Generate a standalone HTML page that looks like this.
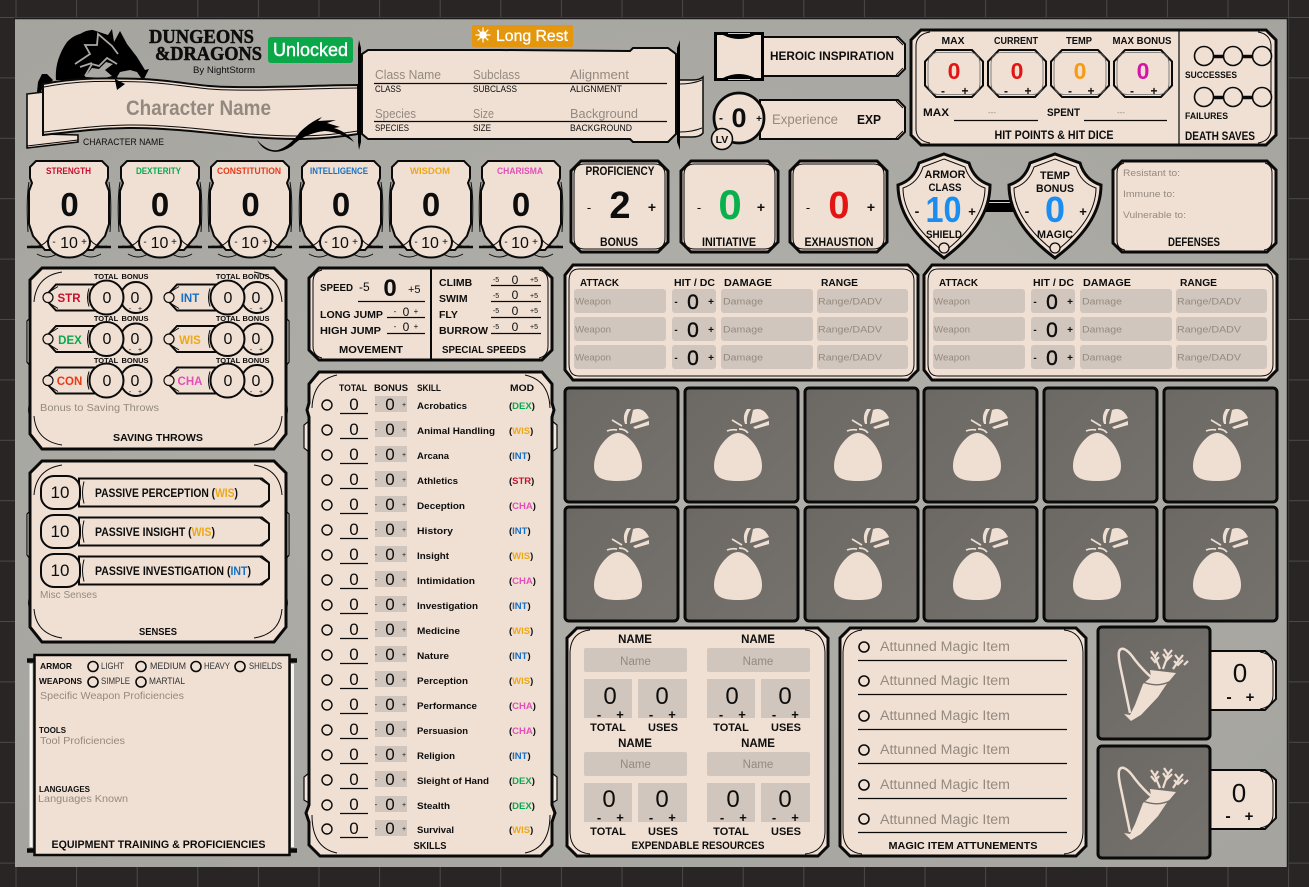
<!DOCTYPE html>
<html><head><meta charset="utf-8"><title>Character Sheet</title>
<style>
html,body{margin:0;padding:0;background:#292525}
svg{display:block}
text{font-family:"Liberation Sans",sans-serif;fill:#0d0d0d}
.b{font-weight:700}
.m{text-anchor:middle}
.p{fill:#94897f}
.f{fill:#f0e0d4;stroke:#0a0a0a;stroke-width:3;stroke-linejoin:miter}
.f2{fill:#f0e0d4;stroke:#0a0a0a;stroke-width:2}
.tb{fill:#f3e6db;stroke:#0a0a0a;stroke-width:1.2}
.t{fill:none;stroke:#0a0a0a;stroke-width:1}
.c{fill:none;stroke:#0a0a0a;stroke-width:1.6}
.g{fill:#d1c6bd}
.l{stroke:#0a0a0a;stroke-width:1.2}
.k{fill:#000}
.str{fill:#c8102e}.dex{fill:#0aa84f}.con{fill:#e83a17}.int{fill:#1670c4}.wis{fill:#eea816}.cha{fill:#e24fb8}
</style></head><body>
<svg xmlns="http://www.w3.org/2000/svg" width="1309" height="887" viewBox="0 0 1309 887">
<defs>
<pattern id="grid" patternUnits="userSpaceOnUse" width="60.6" height="60.4" x="15.5" y="17">
<rect width="60.6" height="60.4" fill="#292525"/><path d="M0 0H60.6M0 0V60.4" stroke="#4a4848" stroke-width="2"/>
</pattern>
<radialGradient id="sheet" cx="50%" cy="50%" r="75%"><stop offset="0" stop-color="#b1b0aa"/><stop offset="1" stop-color="#a4a39d"/></radialGradient>
<linearGradient id="cell" x1="0" y1="0" x2="1" y2="1"><stop offset="0" stop-color="#6c6864"/><stop offset="1" stop-color="#75716d"/></linearGradient>

<g id="ab">
<path d="M-42 247H-22M22 247H42" stroke="#0a0a0a" stroke-width="2.5"/>
<path d="M-33 161H33L39 167V178L37 183L40 191V224L36 236L24 250H-24L-36 236L-40 224V191L-37 183L-39 178V167Z" class="f2"/>
<path d="M-40 182Q-43 200 -41 232M40 182Q43 200 41 232" class="t" stroke-width="1.5"/>
<path d="M-32 254Q-22 260 -12 254M32 254Q22 260 12 254M-38 246Q-26 248 -20 238M38 246Q26 248 20 238" class="t"/>
<ellipse cx="0" cy="242" rx="21" ry="15.5" class="f2"/>
</g>

<g id="bag">
<rect x="0" y="0" width="113" height="114" rx="4" fill="url(#cell)" stroke="#0a0a0a" stroke-width="3"/>
<path d="M53 45C43 45 29 62 29 78C29 90 38 93 53 93C68 93 77 90 77 78C77 62 63 45 53 45Z" fill="#efdfd3"/>
<path d="M65 36L68 22Q78 18 84 30Q76 33 65 36ZM60 36Q57 28 62 21L66 21Q61 28 62 36ZM68 39L84 33L84 37L70 41Z" fill="#efdfd3"/>
<path d="M47 32L57 38M42 43Q47 41 52 42M54 41Q60 41 63 45" stroke="#efdfd3" stroke-width="1.7" fill="none"/>
</g>

<g id="qv">
<rect x="0" y="0" width="112" height="112" rx="4" fill="url(#cell)" stroke="#0a0a0a" stroke-width="3"/>
<path d="M32 86L23 43Q20 30 21 25Q22 21 26 22Q31 24 37 33Q44 42 53 50" fill="none" stroke="#efdfd3" stroke-width="2.5"/>
<path d="M52 43L78 46L68 58L60 70L43 88L33 94L26 87L32 88L37 78L45 57L53 50Z" fill="#efdfd3"/>
<path d="M45 55Q60 61 73 54" stroke="#716d69" stroke-width="1.4" fill="none"/>
<path d="M62 42L57 30M53 24L57 30L60 25M53 30L57 35L61 30M65 42L70 28M66 22L70 28L74 23M65 27L69 33L74 28M75 42L81 33M77 28L81 33L85 28M76 34L80 38L85 33M86 38L90 34" stroke="#efdfd3" stroke-width="2.2" fill="none"/>
</g>

<g id="oct">
<path d="M-18 -23.5H18L29 -12V12L18 23.5H-18L-29 12V-12Z" class="f2"/>
<path d="M-15 -21H15Q26 -21 26 -9V9Q26 21 15 21H-15Q-26 21 -26 9V-9Q-26 -21 -15 -21Z" fill="none" stroke="#666" stroke-width=".8"/>
</g>

<g id="sv">
<path d="M-4 0L8 -13H46V13H8Z" class="f2" stroke-width="1.4"/>
<path d="M2 6L10 11M2 -6L10 -11" class="t"/>
<circle cx="0" cy="0" r="5" fill="#f0e0d4" stroke="#0a0a0a" stroke-width="1.2"/>
<path d="M41 -9Q38 0 41 9" class="t"/>
<circle cx="88" cy="0" r="15.500" class="f2" stroke-width="2.2"/>
<circle cx="58.500" cy="0" r="17" class="f2" stroke-width="2.2"/>
</g>

<g id="sen">
<path d="M38 -14H221L228 -8V8L221 14H38Z" class="f2" stroke-width="1.8"/>
<path d="M218 -14L227 -8M218 14L227 8" class="t"/>
<path d="M43 -11Q40 0 43 11" class="t"/>
<rect x="0" y="-16.500" width="39" height="33" rx="13" class="f2"/>
</g>

<g id="sk">
<circle cx="327" cy="0" r="5" fill="none" stroke="#0a0a0a" stroke-width="1.4"/>
<path d="M340 8.5H368" class="l"/>
<rect x="375" y="-9" width="32" height="16" class="g"/>
</g>

<g id="atk">
<rect x="9" y="0" width="92" height="24" rx="3" class="g"/>
<rect x="107" y="0" width="44" height="24" rx="3" class="g"/>
<rect x="156" y="0" width="92" height="24" rx="3" class="g"/>
<rect x="252" y="0" width="91" height="24" rx="3" class="g"/>
<text x="10" y="15.5" font-size="9.5" class="p" textLength="36" lengthAdjust="spacingAndGlyphs">Weapon</text>
<text x="128" y="20" font-size="21" class="m" stroke="#0d0d0d" stroke-width=".4">0</text>
<text x="111" y="16" font-size="10" class="b m">-</text>
<text x="146" y="16" font-size="10" class="b m">+</text>
<text x="158" y="15.5" font-size="9.5" class="p" textLength="40" lengthAdjust="spacingAndGlyphs">Damage</text>
<text x="253" y="15.5" font-size="9.5" class="p" textLength="64" lengthAdjust="spacingAndGlyphs">Range/DADV</text>
</g>

<g id="atkp">
<path d="M8 0H343L353 10V105L343 115H8L0 105V10Z" class="f"/>
<path d="M14 4H337Q349 4 349 16V99Q349 111 337 111H14Q4 111 4 99V16Q4 4 14 4Z" class="t"/>
</g>

<g id="box">
<path d="M10 0H87L97 10V81L87 91H10L0 81V10Z" class="f" stroke-width="2.5"/>
<path d="M14 3H83Q94 3 94 14V77Q94 88 83 88H14Q3 88 3 77V14Q3 3 14 3Z" class="t"/>
</g>

<g id="shd">
<path d="M0 0L25 9Q30 26 46 31Q46 70 0 104Q-46 70 -46 31Q-30 26 -25 9Z" fill="#f0e0d4" stroke="#0a0a0a" stroke-width="3"/>
<path d="M0 5L21 13Q26 29 41 34Q41 66 0 98Q-41 66 -41 34Q-26 29 -21 13Z" class="t"/>
<circle cx="0" cy="94" r="5" fill="#f0e0d4" stroke="#0a0a0a" stroke-width="1.3"/>
</g>

<g id="cnt">
<path d="M0 0H55L66 10V48L55 59H0Z" class="f2" stroke-width="2"/>
<path d="M50 1Q63 3 63 15V44Q63 56 50 58" class="t"/>
</g>

<g id="bigp">
<path d="M2 50L-1 53V94L2 98ZM258 50L261 53V94L258 98Z" class="tb"/>
<path d="M14 0H246L258 12V166L246 181H14L2 166V12Z" class="f" stroke-width="3.200"/>
<path d="M2 135Q-1 142 2 149M258 135Q261 142 258 149" class="t" stroke-width="1.500"/>
<path d="M34 4Q8 8 6 34M226 4Q252 8 254 34M6 148Q8 173 34 177M254 148Q252 173 226 177" class="t"/>
</g>
</defs>

<rect width="1309" height="887" fill="url(#grid)"/>
<rect x="15" y="19" width="1272" height="848" fill="url(#sheet)"/>
<path d="M14 18.5H1287.5V867.5" fill="none" stroke="#1c1a1a" stroke-width="1.5"/>

<!-- dragon behind banner -->
<path d="M56 80C55 68 58 55 67 42C72 37 76 35 80 34C85 31 89 30 93 30L108 35L112 29L114 42L120 31L127 44L137 57L145 70L149 69L143 81L137 72L130 70L120 72L117 77L125 84L117 90L115 80Z" class="k"/>
<path d="M85 77L92 68L99 69L106 62L113 64L105 70L112 76L105 78Z" fill="#a9a8a2"/>
<path d="M75 64L90 54L85 45L97 45L98 34L112 46L118 54M80 67L92 63M85 76L92 64L99 66L107 58L117 64" fill="none" stroke="#a9a8a2" stroke-width="1.800"/>
<path d="M37 92L38 82L42 74L47 74L53 80L50 84L44 84L41 92Z" class="k"/>

<!-- banner -->
<path d="M27 94L44 92V134L78 135V142L27 148Z" fill="#f0e0d4" stroke="#0a0a0a" stroke-width="1.6"/>
<path d="M27 146L78 140" class="t" stroke-width="1.5"/>
<path d="M43 84C80 77 110 78 143 79C180 81 200 87 233 87C280 88 320 85 358 85V134C320 140 290 140 250 137C210 133 170 128 133 128C100 128 70 132 43 135Z" fill="#f0e0d4" stroke="#0a0a0a" stroke-width="2"/>
<path d="M44 87C80 80 110 81 143 82C180 84 200 90 233 90C280 91 320 88 358 88M44 132C70 129 100 125 133 125C170 125 210 130 250 134C290 137 320 137 358 131" fill="none" stroke="#0a0a0a" stroke-width="1"/>
<path d="M115 79L125 84L117 90L115 80Z" class="k"/>
<!-- tail -->
<path d="M257 140Q268 152 278 150Q290 146 300 132Q310 122 322 117L318 121L336 120L327 123L340 127L334 128Q347 132 354 142Q340 132 325 131Q305 133 292 146Q280 154 270 151Q262 149 257 140Z" class="k"/>

<text x="149" y="43" font-size="19.5" font-weight="700" stroke="#0d0d0d" stroke-width=".5" style="font-family:'Liberation Serif',serif" textLength="105" lengthAdjust="spacingAndGlyphs">DUNGEONS</text>
<text x="155" y="60" font-size="19.5" font-weight="700" stroke="#0d0d0d" stroke-width=".5" style="font-family:'Liberation Serif',serif" textLength="107" lengthAdjust="spacingAndGlyphs">&amp;DRAGONS</text>
<text x="193" y="73" font-size="9.5" textLength="62" lengthAdjust="spacingAndGlyphs">By NightStorm</text>

<rect x="268" y="37" width="85" height="26" rx="3" fill="#0ba84a"/>
<text x="310.500" y="56" font-size="18" class="m" style="fill:#fff" stroke="#fff" stroke-width=".4" textLength="75" lengthAdjust="spacingAndGlyphs">Unlocked</text>

<text x="126" y="115" font-size="21" class="b p" textLength="145" lengthAdjust="spacingAndGlyphs">Character Name</text>
<text x="83" y="145" font-size="9.5" textLength="81" lengthAdjust="spacingAndGlyphs">CHARACTER NAME</text>

<rect x="472" y="25" width="101" height="22" rx="2" fill="#e3960e"/>
<circle cx="483" cy="35" r="3.8" fill="#fff"/>
<path d="M483 27.500V42.500M475.500 35H490.500M477.700 29.700L488.300 40.300M488.300 29.700L477.700 40.300" stroke="#fff" stroke-width="1.2"/>
<text x="496" y="41" font-size="16" style="fill:#fff" stroke="#fff" stroke-width=".3" textLength="72" lengthAdjust="spacingAndGlyphs">Long Rest</text>

<!-- class panel -->
<path d="M678 80H692Q700 80 703 77V133Q700 137 692 137H678Z" fill="#f0e0d4" stroke="#0a0a0a" stroke-width="1.5"/>
<path d="M680 84Q692 84 702 80M680 132Q692 132 702 128" class="t"/>
<path d="M368 50H500L630 51L633 48H668L676 54V134L668 142H633L630 139L500 139H368L362 134V54Z" fill="#f0e0d4" stroke="#0a0a0a" stroke-width="2"/>
<path d="M680 40V150L677 142V48Z" class="k"/>
<path d="M359 40L361 48V142L359 150L358 142V48Z" class="k"/>
<text x="375" y="79" font-size="13" class="p" textLength="66" lengthAdjust="spacingAndGlyphs">Class Name</text>
<text x="473" y="79" font-size="13" class="p" textLength="47" lengthAdjust="spacingAndGlyphs">Subclass</text>
<text x="570" y="79" font-size="13" class="p" textLength="59" lengthAdjust="spacingAndGlyphs">Alignment</text>
<path d="M374 83.500H667M374 121.500H667" class="l"/>
<text x="375" y="92" font-size="9" textLength="26" lengthAdjust="spacingAndGlyphs">CLASS</text>
<text x="473" y="92" font-size="9" textLength="44" lengthAdjust="spacingAndGlyphs">SUBCLASS</text>
<text x="570" y="92" font-size="9" textLength="52" lengthAdjust="spacingAndGlyphs">ALIGNMENT</text>
<text x="375" y="118" font-size="13" class="p" textLength="41" lengthAdjust="spacingAndGlyphs">Species</text>
<text x="473" y="118" font-size="13" class="p" textLength="21" lengthAdjust="spacingAndGlyphs">Size</text>
<text x="570" y="118" font-size="13" class="p" textLength="68" lengthAdjust="spacingAndGlyphs">Background</text>
<text x="375" y="131" font-size="9" textLength="34" lengthAdjust="spacingAndGlyphs">SPECIES</text>
<text x="473" y="131" font-size="9" textLength="18" lengthAdjust="spacingAndGlyphs">SIZE</text>
<text x="570" y="131" font-size="9" textLength="62" lengthAdjust="spacingAndGlyphs">BACKGROUND</text>

<!-- heroic -->
<path d="M760 37H898L905 44V69L898 76H760Z" class="f2" stroke-width="2"/>
<path d="M896 38L903 45M896 75L903 68" class="t"/>
<rect x="714" y="32" width="50" height="49" class="k"/>
<path d="M717 35H723Q731 39 739 39Q747 39 755 35H761V78H755Q747 74 739 74Q731 74 723 78H717Z" fill="#f0e0d4"/>
<path d="M728 33.500H750M728 79.500H750" stroke="#cfc8c0" stroke-width="1"/>
<text x="770" y="60" font-size="12" class="b" textLength="124" lengthAdjust="spacingAndGlyphs">HEROIC INSPIRATION</text>

<path d="M760 100H898L905 107V132L898 139H760Z" class="f2" stroke-width="2"/>
<path d="M896 101L903 108M896 138L903 131" class="t"/>
<circle cx="739" cy="118" r="25" fill="#f0e0d4" stroke="#0a0a0a" stroke-width="2.8"/>
<circle cx="722" cy="139" r="10.500" fill="#f0e0d4" stroke="#0a0a0a" stroke-width="1.6"/>
<text x="722" y="143" font-size="10.500" class="b m">LV</text>
<text x="739" y="127" font-size="27" class="b m">0</text>
<text x="721" y="122" font-size="12" class="b m">-</text>
<text x="759" y="122" font-size="10" class="b m">+</text>
<text x="772" y="124" font-size="14" class="p" textLength="66" lengthAdjust="spacingAndGlyphs">Experience</text>
<text x="857" y="124" font-size="13" class="b" textLength="24" lengthAdjust="spacingAndGlyphs">EXP</text>

<!-- HP -->
<path d="M921 30H1266L1276 40V135L1266 145H921L911 135V40Z" class="f"/>
<path d="M930 32Q917 34 916 45V130Q917 141 930 143M1258 32Q1270 34 1271 45V130Q1270 141 1258 143" class="t"/>
<path d="M1179 31V144" class="l" stroke-width="1.6"/>
<text x="953" y="44" font-size="10" class="b m" textLength="23" lengthAdjust="spacingAndGlyphs">MAX</text>
<text x="1016" y="44" font-size="10" class="b m" textLength="44" lengthAdjust="spacingAndGlyphs">CURRENT</text>
<text x="1079" y="44" font-size="10" class="b m" textLength="26" lengthAdjust="spacingAndGlyphs">TEMP</text>
<text x="1142" y="44" font-size="10" class="b m" textLength="59" lengthAdjust="spacingAndGlyphs">MAX BONUS</text>
<use href="#oct" x="954" y="73.500"/><use href="#oct" x="1017" y="73.500"/><use href="#oct" x="1080" y="73.500"/><use href="#oct" x="1143" y="73.500"/>
<text x="954" y="79" font-size="23" class="b m" style="fill:#e31414">0</text>
<text x="1017" y="79" font-size="23" class="b m" style="fill:#e31414">0</text>
<text x="1080" y="79" font-size="23" class="b m" style="fill:#f59a13">0</text>
<text x="1143" y="79" font-size="23" class="b m" style="fill:#d414a8">0</text>
<text x="943" y="95" font-size="12" class="b m">-</text><text x="965" y="95" font-size="12" class="b m">+</text>
<text x="1006" y="95" font-size="12" class="b m">-</text><text x="1028" y="95" font-size="12" class="b m">+</text>
<text x="1070" y="95" font-size="12" class="b m">-</text><text x="1091" y="95" font-size="12" class="b m">+</text>
<text x="1132" y="95" font-size="12" class="b m">-</text><text x="1154" y="95" font-size="12" class="b m">+</text>
<text x="923" y="116" font-size="11" class="b" textLength="26" lengthAdjust="spacingAndGlyphs">MAX</text>
<path d="M954 120.500H1038M1084 120.500H1167" class="l"/>
<text x="992" y="115" font-size="8" class="m p">---</text>
<text x="1121" y="115" font-size="8" class="m p">---</text>
<text x="1047" y="116" font-size="11" class="b" textLength="33" lengthAdjust="spacingAndGlyphs">SPENT</text>
<text x="1054" y="139" font-size="11.500" class="b m" textLength="119" lengthAdjust="spacingAndGlyphs">HIT POINTS &amp; HIT DICE</text>
<path d="M1204 56.500H1262M1204 97.500H1262" stroke="#0a0a0a" stroke-width="3.5"/>
<g fill="#f0e0d4" stroke="#0a0a0a" stroke-width="1.6">
<circle cx="1204" cy="56" r="9.500"/><circle cx="1233" cy="56" r="9.500"/><circle cx="1262" cy="56" r="9.500"/>
<circle cx="1204" cy="97" r="9.500"/><circle cx="1233" cy="97" r="9.500"/><circle cx="1262" cy="97" r="9.500"/>
</g>
<text x="1185" y="78" font-size="9.500" class="b" textLength="52" lengthAdjust="spacingAndGlyphs">SUCCESSES</text>
<text x="1185" y="119" font-size="9.500" class="b" textLength="43" lengthAdjust="spacingAndGlyphs">FAILURES</text>
<text x="1220" y="140" font-size="12" class="b m" textLength="70" lengthAdjust="spacingAndGlyphs">DEATH SAVES</text>

<!-- abilities -->
<use href="#ab" x="69"/><use href="#ab" x="160"/><use href="#ab" x="250"/><use href="#ab" x="341"/><use href="#ab" x="431"/><use href="#ab" x="521"/>
<text x="68.500" y="174" font-size="9.500" class="b m str" textLength="45" lengthAdjust="spacingAndGlyphs">STRENGTH</text>
<text x="158.500" y="174" font-size="9.500" class="b m dex" textLength="45" lengthAdjust="spacingAndGlyphs">DEXTERITY</text>
<text x="249" y="174" font-size="9.500" class="b m con" textLength="64" lengthAdjust="spacingAndGlyphs">CONSTITUTION</text>
<text x="339" y="174" font-size="9.500" class="b m int" textLength="58" lengthAdjust="spacingAndGlyphs">INTELLIGENCE</text>
<text x="430" y="174" font-size="9.500" class="b m wis" textLength="40" lengthAdjust="spacingAndGlyphs">WISDOM</text>
<text x="520" y="174" font-size="9.500" class="b m cha" textLength="46" lengthAdjust="spacingAndGlyphs">CHARISMA</text>
<g font-size="33"><text x="69.500" y="216" class="b m">0</text><text x="160" y="216" class="b m">0</text><text x="250.500" y="216" class="b m">0</text><text x="341" y="216" class="b m">0</text><text x="431" y="216" class="b m">0</text><text x="521" y="216" class="b m">0</text></g>
<g font-size="16"><text x="69" y="248" class="m">10</text><text x="159.500" y="248" class="m">10</text><text x="250" y="248" class="m">10</text><text x="340" y="248" class="m">10</text><text x="430" y="248" class="m">10</text><text x="520" y="248" class="m">10</text></g>
<g font-size="10"><text x="54" y="245" class="m">-</text><text x="84" y="245" class="m">+</text><text x="145" y="245" class="m">-</text><text x="174" y="245" class="m">+</text><text x="236" y="245" class="m">-</text><text x="265" y="245" class="m">+</text><text x="326" y="245" class="m">-</text><text x="355" y="245" class="m">+</text><text x="416" y="245" class="m">-</text><text x="445" y="245" class="m">+</text><text x="506" y="245" class="m">-</text><text x="535" y="245" class="m">+</text></g>

<!-- proficiency etc -->
<use href="#box" x="571" y="161"/><use href="#box" x="681" y="161"/><use href="#box" x="790" y="161"/>
<text x="620" y="175" font-size="11.500" class="b m" textLength="69" lengthAdjust="spacingAndGlyphs">PROFICIENCY</text>
<text x="620" y="218" font-size="38" class="b m">2</text>
<text x="589" y="212" font-size="13" class="m">-</text><text x="652" y="212" font-size="14" class="b m">+</text>
<text x="619" y="246" font-size="11.500" class="b m" textLength="38" lengthAdjust="spacingAndGlyphs">BONUS</text>
<text x="730" y="219" font-size="42" class="b m" style="fill:#0ab04d">0</text>
<text x="699" y="212" font-size="13" class="m">-</text><text x="761" y="212" font-size="14" class="b m">+</text>
<text x="729" y="246" font-size="11.500" class="b m" textLength="54" lengthAdjust="spacingAndGlyphs">INITIATIVE</text>
<text x="839" y="218" font-size="38" class="b m" style="fill:#e31414">0</text>
<text x="808" y="212" font-size="13" class="m">-</text><text x="871" y="212" font-size="14" class="b m">+</text>
<text x="839" y="246" font-size="11.500" class="b m" textLength="69" lengthAdjust="spacingAndGlyphs">EXHAUSTION</text>

<!-- shields -->
<rect x="985" y="200" width="30" height="12" class="k"/><path d="M986 202.500H1014" stroke="#d8d4cf" stroke-width="1"/>
<use href="#shd" x="944" y="154"/><use href="#shd" x="1055" y="154"/>
<text x="945" y="178" font-size="11" class="b m" textLength="41" lengthAdjust="spacingAndGlyphs">ARMOR</text>
<text x="945" y="191" font-size="11" class="b m" textLength="33" lengthAdjust="spacingAndGlyphs">CLASS</text>
<text x="943.500" y="222" font-size="36" class="b m" style="fill:#1a8ef0" textLength="36" lengthAdjust="spacingAndGlyphs">10</text>
<text x="917" y="216" font-size="14" class="b m">-</text><text x="972" y="216" font-size="13" class="b m">+</text>
<text x="944" y="238" font-size="11" class="b m" textLength="36" lengthAdjust="spacingAndGlyphs">SHIELD</text>
<text x="1055" y="179" font-size="11" class="b m" textLength="30" lengthAdjust="spacingAndGlyphs">TEMP</text>
<text x="1055" y="192" font-size="11" class="b m" textLength="38" lengthAdjust="spacingAndGlyphs">BONUS</text>
<text x="1055" y="222" font-size="36" class="b m" style="fill:#1a8ef0">0</text>
<text x="1027" y="216" font-size="14" class="b m">-</text><text x="1083" y="216" font-size="13" class="b m">+</text>
<text x="1055" y="238" font-size="11" class="b m" textLength="36" lengthAdjust="spacingAndGlyphs">MAGIC</text>

<!-- defenses -->
<path d="M1122 161H1267L1276 170V243L1267 252H1122L1113 243V170Z" class="f" stroke-width="2.5"/>
<path d="M1124 163Q1117 165 1117 173V240Q1117 249 1125 250M1265 163Q1272 165 1272 173V240Q1272 249 1264 250" class="t"/>
<text x="1123" y="176" font-size="9.500" class="p" textLength="57" lengthAdjust="spacingAndGlyphs">Resistant to:</text>
<text x="1123" y="197" font-size="9.500" class="p" textLength="52" lengthAdjust="spacingAndGlyphs">Immune to:</text>
<text x="1123" y="218" font-size="9.500" class="p" textLength="63" lengthAdjust="spacingAndGlyphs">Vulnerable to:</text>
<text x="1194" y="246" font-size="11.500" class="b m" textLength="52" lengthAdjust="spacingAndGlyphs">DEFENSES</text>

<!-- saving throws -->
<use href="#bigp" x="28" y="268"/>
<g font-size="7.500">
<text x="106" y="279" class="b m">TOTAL</text><text x="135" y="279" class="b m">BONUS</text><text x="228" y="279" class="b m">TOTAL</text><text x="256" y="279" class="b m">BONUS</text>
<text x="106" y="321" class="b m">TOTAL</text><text x="135" y="321" class="b m">BONUS</text><text x="228" y="321" class="b m">TOTAL</text><text x="256" y="321" class="b m">BONUS</text>
<text x="106" y="363" class="b m">TOTAL</text><text x="135" y="363" class="b m">BONUS</text><text x="228" y="363" class="b m">TOTAL</text><text x="256" y="363" class="b m">BONUS</text>
</g>
<use href="#sv" x="48" y="297.500"/><use href="#sv" x="169" y="297.500"/><use href="#sv" x="48" y="339"/><use href="#sv" x="169" y="339"/><use href="#sv" x="48" y="380.500"/><use href="#sv" x="169" y="380.500"/>
<text x="69" y="302" font-size="11.500" class="b m str">STR</text>
<text x="190" y="302" font-size="11.500" class="b m int">INT</text>
<text x="70" y="344" font-size="11.500" class="b m dex">DEX</text>
<text x="190" y="344" font-size="11.500" class="b m wis">WIS</text>
<text x="69.500" y="385" font-size="11.500" class="b m con">CON</text>
<text x="190" y="385" font-size="11.500" class="b m cha">CHA</text>
<g font-size="16">
<text x="107" y="303" class="m">0</text><text x="135" y="303" class="m">0</text><text x="228" y="303" class="m">0</text><text x="256" y="303" class="m">0</text>
<text x="107" y="344" class="m">0</text><text x="135" y="344" class="m">0</text><text x="228" y="344" class="m">0</text><text x="256" y="344" class="m">0</text>
<text x="107" y="386" class="m">0</text><text x="135" y="386" class="m">0</text><text x="228" y="386" class="m">0</text><text x="256" y="386" class="m">0</text>
</g>
<g font-size="7">
<text x="130" y="311" class="m">-</text><text x="140" y="311" class="m">+</text><text x="251" y="311" class="m">-</text><text x="261" y="311" class="m">+</text>
<text x="130" y="352" class="m">-</text><text x="140" y="352" class="m">+</text><text x="251" y="352" class="m">-</text><text x="261" y="352" class="m">+</text>
<text x="130" y="394" class="m">-</text><text x="140" y="394" class="m">+</text><text x="251" y="394" class="m">-</text><text x="261" y="394" class="m">+</text>
</g>
<text x="40" y="411" font-size="10" class="p" textLength="119" lengthAdjust="spacingAndGlyphs">Bonus to Saving Throws</text>
<text x="158" y="441" font-size="10.500" class="b m" textLength="90" lengthAdjust="spacingAndGlyphs">SAVING THROWS</text>

<!-- senses -->
<use href="#bigp" x="28" y="461"/>
<use href="#sen" x="41" y="492.500"/><use href="#sen" x="41" y="531.500"/><use href="#sen" x="41" y="570.500"/>
<text x="60" y="498" font-size="17" class="m">10</text><text x="60" y="537" font-size="17" class="m">10</text><text x="60" y="576" font-size="17" class="m">10</text>
<text x="95" y="497" font-size="11.500" class="b" textLength="143" lengthAdjust="spacingAndGlyphs">PASSIVE PERCEPTION (<tspan class="wis">WIS</tspan>)</text>
<text x="95" y="536" font-size="11.500" class="b" textLength="120" lengthAdjust="spacingAndGlyphs">PASSIVE INSIGHT (<tspan class="wis">WIS</tspan>)</text>
<text x="95" y="575" font-size="11.500" class="b" textLength="156" lengthAdjust="spacingAndGlyphs">PASSIVE INVESTIGATION (<tspan class="int">INT</tspan>)</text>
<text x="40" y="598" font-size="10" class="p" textLength="57" lengthAdjust="spacingAndGlyphs">Misc Senses</text>
<text x="158" y="635" font-size="10.500" class="b m" textLength="38" lengthAdjust="spacingAndGlyphs">SENSES</text>

<!-- movement -->
<path d="M319 268H542L552 278V350L542 360H319L309 350V278Z" class="f"/>
<path d="M322 270Q313 272 313 282V346Q313 356 322 358M539 270Q548 272 548 282V346Q548 356 539 358" class="t"/>
<path d="M431 268V360" stroke="#0a0a0a" stroke-width="2"/>
<text x="320" y="291" font-size="10.500" class="b" textLength="33" lengthAdjust="spacingAndGlyphs">SPEED</text>
<text x="359" y="291" font-size="12">-5</text><text x="390" y="296" font-size="24" class="b m">0</text><text x="408" y="293" font-size="11">+5</text>
<path d="M358 301.500H425M387 317.500H425M387 333.500H425" class="l"/>
<text x="320" y="318" font-size="10.500" class="b" textLength="63" lengthAdjust="spacingAndGlyphs">LONG JUMP</text>
<text x="320" y="334" font-size="10.500" class="b" textLength="61" lengthAdjust="spacingAndGlyphs">HIGH JUMP</text>
<text x="406" y="316" font-size="12" class="m">0</text><text x="395" y="314" font-size="8" class="m">-</text><text x="416" y="314" font-size="8" class="m">+</text>
<text x="406" y="331" font-size="12" class="m">0</text><text x="395" y="329" font-size="8" class="m">-</text><text x="416" y="329" font-size="8" class="m">+</text>
<text x="371" y="353" font-size="10.500" class="b m" textLength="64" lengthAdjust="spacingAndGlyphs">MOVEMENT</text>
<text x="439" y="286" font-size="10.500" class="b">CLIMB</text><text x="439" y="302" font-size="10.500" class="b">SWIM</text><text x="439" y="318" font-size="10.500" class="b">FLY</text><text x="439" y="334" font-size="10.500" class="b" textLength="49" lengthAdjust="spacingAndGlyphs">BURROW</text>
<path d="M491 285.500H541M491 301.500H541M491 317.500H541M491 333.500H541" class="l"/>
<g font-size="7">
<text x="496" y="282" class="m">-5</text><text x="534" y="282" class="m">+5</text>
<text x="496" y="298" class="m">-5</text><text x="534" y="298" class="m">+5</text>
<text x="496" y="313" class="m">-5</text><text x="534" y="313" class="m">+5</text>
<text x="496" y="329" class="m">-5</text><text x="534" y="329" class="m">+5</text>
</g>
<g font-size="12"><text x="515" y="284" class="m">0</text><text x="515" y="299" class="m">0</text><text x="515" y="315" class="m">0</text><text x="515" y="331" class="m">0</text></g>
<text x="484" y="353" font-size="10.500" class="b m" textLength="84" lengthAdjust="spacingAndGlyphs">SPECIAL SPEEDS</text>

<!-- skills -->
<path d="M309 421L304 425V448L309 452ZM552 421L557 425V448L552 452ZM309 773L304 777V800L309 803ZM552 773L557 777V800L552 803Z" class="tb"/>
<path d="M319 372H542L552 384V403L554 410L552 417V805L555 813L552 822V845L541 856H320L309 845V822L306 813L309 805V417L307 410L309 403V384Z" class="f" stroke-width="3.200"/>
<path d="M337 375Q313 380 312 408M525 375Q549 380 550 408M312 815Q312 848 337 853M550 815Q550 848 525 853" class="t"/>
<text x="353" y="391" font-size="9" class="b m" textLength="28" lengthAdjust="spacingAndGlyphs">TOTAL</text>
<text x="391" y="391" font-size="9" class="b m" textLength="34" lengthAdjust="spacingAndGlyphs">BONUS</text>
<text x="417" y="391" font-size="9" class="b" textLength="24" lengthAdjust="spacingAndGlyphs">SKILL</text>
<text x="522" y="391" font-size="9" class="b m" textLength="24" lengthAdjust="spacingAndGlyphs">MOD</text>

<g transform="translate(0,405)"><use href="#sk"/><text x="354" y="5" font-size="17" class="m">0</text><text x="390" y="5" font-size="17" class="m">0</text><text x="376" y="2" font-size="8" class="m">-</text><text x="404" y="2" font-size="7" class="m">+</text><text x="417" y="4" font-size="9.500" class="b" textLength="50" lengthAdjust="spacingAndGlyphs">Acrobatics</text><text x="509" y="4" font-size="9.500" class="b">(<tspan class="dex">DEX</tspan>)</text></g>
<g transform="translate(0,430)"><use href="#sk"/><text x="354" y="5" font-size="17" class="m">0</text><text x="390" y="5" font-size="17" class="m">0</text><text x="376" y="2" font-size="8" class="m">-</text><text x="404" y="2" font-size="7" class="m">+</text><text x="417" y="4" font-size="9.500" class="b" textLength="78" lengthAdjust="spacingAndGlyphs">Animal Handling</text><text x="509" y="4" font-size="9.500" class="b">(<tspan class="wis">WIS</tspan>)</text></g>
<g transform="translate(0,455)"><use href="#sk"/><text x="354" y="5" font-size="17" class="m">0</text><text x="390" y="5" font-size="17" class="m">0</text><text x="376" y="2" font-size="8" class="m">-</text><text x="404" y="2" font-size="7" class="m">+</text><text x="417" y="4" font-size="9.500" class="b" textLength="32" lengthAdjust="spacingAndGlyphs">Arcana</text><text x="509" y="4" font-size="9.500" class="b">(<tspan class="int">INT</tspan>)</text></g>
<g transform="translate(0,480)"><use href="#sk"/><text x="354" y="5" font-size="17" class="m">0</text><text x="390" y="5" font-size="17" class="m">0</text><text x="376" y="2" font-size="8" class="m">-</text><text x="404" y="2" font-size="7" class="m">+</text><text x="417" y="4" font-size="9.500" class="b" textLength="41" lengthAdjust="spacingAndGlyphs">Athletics</text><text x="509" y="4" font-size="9.500" class="b">(<tspan class="str">STR</tspan>)</text></g>
<g transform="translate(0,505)"><use href="#sk"/><text x="354" y="5" font-size="17" class="m">0</text><text x="390" y="5" font-size="17" class="m">0</text><text x="376" y="2" font-size="8" class="m">-</text><text x="404" y="2" font-size="7" class="m">+</text><text x="417" y="4" font-size="9.500" class="b" textLength="48" lengthAdjust="spacingAndGlyphs">Deception</text><text x="509" y="4" font-size="9.500" class="b">(<tspan class="cha">CHA</tspan>)</text></g>
<g transform="translate(0,530)"><use href="#sk"/><text x="354" y="5" font-size="17" class="m">0</text><text x="390" y="5" font-size="17" class="m">0</text><text x="376" y="2" font-size="8" class="m">-</text><text x="404" y="2" font-size="7" class="m">+</text><text x="417" y="4" font-size="9.500" class="b" textLength="36" lengthAdjust="spacingAndGlyphs">History</text><text x="509" y="4" font-size="9.500" class="b">(<tspan class="int">INT</tspan>)</text></g>
<g transform="translate(0,555)"><use href="#sk"/><text x="354" y="5" font-size="17" class="m">0</text><text x="390" y="5" font-size="17" class="m">0</text><text x="376" y="2" font-size="8" class="m">-</text><text x="404" y="2" font-size="7" class="m">+</text><text x="417" y="4" font-size="9.500" class="b" textLength="32" lengthAdjust="spacingAndGlyphs">Insight</text><text x="509" y="4" font-size="9.500" class="b">(<tspan class="wis">WIS</tspan>)</text></g>
<g transform="translate(0,580)"><use href="#sk"/><text x="354" y="5" font-size="17" class="m">0</text><text x="390" y="5" font-size="17" class="m">0</text><text x="376" y="2" font-size="8" class="m">-</text><text x="404" y="2" font-size="7" class="m">+</text><text x="417" y="4" font-size="9.500" class="b" textLength="58" lengthAdjust="spacingAndGlyphs">Intimidation</text><text x="509" y="4" font-size="9.500" class="b">(<tspan class="cha">CHA</tspan>)</text></g>
<g transform="translate(0,605)"><use href="#sk"/><text x="354" y="5" font-size="17" class="m">0</text><text x="390" y="5" font-size="17" class="m">0</text><text x="376" y="2" font-size="8" class="m">-</text><text x="404" y="2" font-size="7" class="m">+</text><text x="417" y="4" font-size="9.500" class="b" textLength="61" lengthAdjust="spacingAndGlyphs">Investigation</text><text x="509" y="4" font-size="9.500" class="b">(<tspan class="int">INT</tspan>)</text></g>
<g transform="translate(0,630)"><use href="#sk"/><text x="354" y="5" font-size="17" class="m">0</text><text x="390" y="5" font-size="17" class="m">0</text><text x="376" y="2" font-size="8" class="m">-</text><text x="404" y="2" font-size="7" class="m">+</text><text x="417" y="4" font-size="9.500" class="b" textLength="43" lengthAdjust="spacingAndGlyphs">Medicine</text><text x="509" y="4" font-size="9.500" class="b">(<tspan class="wis">WIS</tspan>)</text></g>
<g transform="translate(0,655)"><use href="#sk"/><text x="354" y="5" font-size="17" class="m">0</text><text x="390" y="5" font-size="17" class="m">0</text><text x="376" y="2" font-size="8" class="m">-</text><text x="404" y="2" font-size="7" class="m">+</text><text x="417" y="4" font-size="9.500" class="b" textLength="32" lengthAdjust="spacingAndGlyphs">Nature</text><text x="509" y="4" font-size="9.500" class="b">(<tspan class="int">INT</tspan>)</text></g>
<g transform="translate(0,680)"><use href="#sk"/><text x="354" y="5" font-size="17" class="m">0</text><text x="390" y="5" font-size="17" class="m">0</text><text x="376" y="2" font-size="8" class="m">-</text><text x="404" y="2" font-size="7" class="m">+</text><text x="417" y="4" font-size="9.500" class="b" textLength="51" lengthAdjust="spacingAndGlyphs">Perception</text><text x="509" y="4" font-size="9.500" class="b">(<tspan class="wis">WIS</tspan>)</text></g>
<g transform="translate(0,705)"><use href="#sk"/><text x="354" y="5" font-size="17" class="m">0</text><text x="390" y="5" font-size="17" class="m">0</text><text x="376" y="2" font-size="8" class="m">-</text><text x="404" y="2" font-size="7" class="m">+</text><text x="417" y="4" font-size="9.500" class="b" textLength="60" lengthAdjust="spacingAndGlyphs">Performance</text><text x="509" y="4" font-size="9.500" class="b">(<tspan class="cha">CHA</tspan>)</text></g>
<g transform="translate(0,730)"><use href="#sk"/><text x="354" y="5" font-size="17" class="m">0</text><text x="390" y="5" font-size="17" class="m">0</text><text x="376" y="2" font-size="8" class="m">-</text><text x="404" y="2" font-size="7" class="m">+</text><text x="417" y="4" font-size="9.500" class="b" textLength="51" lengthAdjust="spacingAndGlyphs">Persuasion</text><text x="509" y="4" font-size="9.500" class="b">(<tspan class="cha">CHA</tspan>)</text></g>
<g transform="translate(0,755)"><use href="#sk"/><text x="354" y="5" font-size="17" class="m">0</text><text x="390" y="5" font-size="17" class="m">0</text><text x="376" y="2" font-size="8" class="m">-</text><text x="404" y="2" font-size="7" class="m">+</text><text x="417" y="4" font-size="9.500" class="b" textLength="38" lengthAdjust="spacingAndGlyphs">Religion</text><text x="509" y="4" font-size="9.500" class="b">(<tspan class="int">INT</tspan>)</text></g>
<g transform="translate(0,780)"><use href="#sk"/><text x="354" y="5" font-size="17" class="m">0</text><text x="390" y="5" font-size="17" class="m">0</text><text x="376" y="2" font-size="8" class="m">-</text><text x="404" y="2" font-size="7" class="m">+</text><text x="417" y="4" font-size="9.500" class="b" textLength="72" lengthAdjust="spacingAndGlyphs">Sleight of Hand</text><text x="509" y="4" font-size="9.500" class="b">(<tspan class="dex">DEX</tspan>)</text></g>
<g transform="translate(0,805)"><use href="#sk"/><text x="354" y="5" font-size="17" class="m">0</text><text x="390" y="5" font-size="17" class="m">0</text><text x="376" y="2" font-size="8" class="m">-</text><text x="404" y="2" font-size="7" class="m">+</text><text x="417" y="4" font-size="9.500" class="b" textLength="33" lengthAdjust="spacingAndGlyphs">Stealth</text><text x="509" y="4" font-size="9.500" class="b">(<tspan class="dex">DEX</tspan>)</text></g>
<g transform="translate(0,829)"><use href="#sk"/><text x="354" y="5" font-size="17" class="m">0</text><text x="390" y="5" font-size="17" class="m">0</text><text x="376" y="2" font-size="8" class="m">-</text><text x="404" y="2" font-size="7" class="m">+</text><text x="417" y="4" font-size="9.500" class="b" textLength="37" lengthAdjust="spacingAndGlyphs">Survival</text><text x="509" y="4" font-size="9.500" class="b">(<tspan class="wis">WIS</tspan>)</text></g>
<text x="430" y="849" font-size="10.500" class="b m" textLength="33" lengthAdjust="spacingAndGlyphs">SKILLS</text>

<!-- attacks -->
<use href="#atkp" x="565" y="265"/><use href="#atkp" x="924" y="265"/>
<text x="580" y="286" font-size="10.500" class="b" textLength="39" lengthAdjust="spacingAndGlyphs">ATTACK</text>
<text x="674" y="286" font-size="10.500" class="b" textLength="41" lengthAdjust="spacingAndGlyphs">HIT / DC</text>
<text x="724" y="286" font-size="10.500" class="b" textLength="48" lengthAdjust="spacingAndGlyphs">DAMAGE</text>
<text x="821" y="286" font-size="10.500" class="b" textLength="37" lengthAdjust="spacingAndGlyphs">RANGE</text>
<text x="939" y="286" font-size="10.500" class="b" textLength="39" lengthAdjust="spacingAndGlyphs">ATTACK</text>
<text x="1033" y="286" font-size="10.500" class="b" textLength="41" lengthAdjust="spacingAndGlyphs">HIT / DC</text>
<text x="1083" y="286" font-size="10.500" class="b" textLength="48" lengthAdjust="spacingAndGlyphs">DAMAGE</text>
<text x="1180" y="286" font-size="10.500" class="b" textLength="37" lengthAdjust="spacingAndGlyphs">RANGE</text>
<use href="#atk" x="565" y="289"/><use href="#atk" x="565" y="317"/><use href="#atk" x="565" y="345"/>
<use href="#atk" x="924" y="289"/><use href="#atk" x="924" y="317"/><use href="#atk" x="924" y="345"/>

<!-- inventory -->
<use href="#bag" x="565" y="388"/><use href="#bag" x="685" y="388"/><use href="#bag" x="805" y="388"/><use href="#bag" x="924" y="388"/><use href="#bag" x="1044" y="388"/><use href="#bag" x="1164" y="388"/>
<use href="#bag" x="565" y="507"/><use href="#bag" x="685" y="507"/><use href="#bag" x="805" y="507"/><use href="#bag" x="924" y="507"/><use href="#bag" x="1044" y="507"/><use href="#bag" x="1164" y="507"/>

<!-- resources -->
<path d="M577 628H818L828 638V846L818 856H577L567 846V638Z" class="f"/>
<path d="M590 630Q571 632 570 652V833Q571 852 590 854M805 630Q824 632 825 652V833Q824 852 805 854" class="t"/>
<g font-size="11.500">
<text x="635" y="643" class="b m">NAME</text><text x="758" y="643" class="b m">NAME</text>
<text x="635" y="747" class="b m">NAME</text><text x="758" y="747" class="b m">NAME</text>
</g>
<rect x="584" y="648" width="103" height="24" rx="2" class="g"/><rect x="707" y="648" width="103" height="24" rx="2" class="g"/>
<rect x="584" y="752" width="103" height="24" rx="2" class="g"/><rect x="707" y="752" width="103" height="24" rx="2" class="g"/>
<g font-size="11.500">
<text x="635.500" y="665" class="m p">Name</text><text x="758" y="665" class="m p">Name</text>
<text x="635.500" y="768" class="m p">Name</text><text x="758" y="768" class="m p">Name</text>
</g>
<g class="g">
<rect x="584" y="679" width="48" height="39"/><rect x="638" y="679" width="49" height="39"/><rect x="707" y="679" width="48" height="39"/><rect x="761" y="679" width="49" height="39"/>
<rect x="584" y="783" width="48" height="39"/><rect x="638" y="783" width="49" height="39"/><rect x="707" y="783" width="48" height="39"/><rect x="761" y="783" width="49" height="39"/>
</g>
<g font-size="24">
<text x="610" y="704" class="m">0</text><text x="662" y="704" class="m">0</text><text x="732" y="704" class="m">0</text><text x="785" y="704" class="m">0</text>
<text x="609" y="807" class="m">0</text><text x="662" y="807" class="m">0</text><text x="733" y="807" class="m">0</text><text x="785" y="807" class="m">0</text>
</g>
<g font-size="13">
<text x="599" y="719" class="b m">-</text><text x="620" y="719" class="b m">+</text><text x="651" y="719" class="b m">-</text><text x="672" y="719" class="b m">+</text><text x="721" y="719" class="b m">-</text><text x="742" y="719" class="b m">+</text><text x="774" y="719" class="b m">-</text><text x="795" y="719" class="b m">+</text>
<text x="599" y="822" class="b m">-</text><text x="620" y="822" class="b m">+</text><text x="651" y="822" class="b m">-</text><text x="672" y="822" class="b m">+</text><text x="722" y="822" class="b m">-</text><text x="743" y="822" class="b m">+</text><text x="774" y="822" class="b m">-</text><text x="795" y="822" class="b m">+</text>
</g>
<g font-size="11">
<text x="608" y="731" class="b m">TOTAL</text><text x="663" y="731" class="b m">USES</text><text x="731" y="731" class="b m">TOTAL</text><text x="786" y="731" class="b m">USES</text>
<text x="608" y="835" class="b m">TOTAL</text><text x="663" y="835" class="b m">USES</text><text x="731" y="835" class="b m">TOTAL</text><text x="786" y="835" class="b m">USES</text>
</g>
<text x="698" y="849" font-size="11" class="b m" textLength="133" lengthAdjust="spacingAndGlyphs">EXPENDABLE RESOURCES</text>

<!-- attunement -->
<path d="M850 628H1076L1086 638V846L1076 856H850L840 846V638Z" class="f"/>
<path d="M862 630Q844 632 843 652V833Q844 852 862 854M1064 630Q1082 632 1083 652V833Q1082 852 1064 854" class="t"/>
<g class="c"><circle cx="864" cy="647" r="5"/><circle cx="864" cy="681" r="5"/><circle cx="864" cy="716" r="5"/><circle cx="864" cy="750" r="5"/><circle cx="864" cy="785" r="5"/><circle cx="864" cy="819" r="5"/></g>
<path d="M858 660.500H1067M858 694.500H1067M858 729.500H1067M858 763.500H1067M858 798.500H1067M858 832.500H1067" class="l"/>
<g font-size="13.500">
<text x="880" y="651" class="p" textLength="130" lengthAdjust="spacingAndGlyphs">Attunned Magic Item</text>
<text x="880" y="685" class="p" textLength="130" lengthAdjust="spacingAndGlyphs">Attunned Magic Item</text>
<text x="880" y="720" class="p" textLength="130" lengthAdjust="spacingAndGlyphs">Attunned Magic Item</text>
<text x="880" y="754" class="p" textLength="130" lengthAdjust="spacingAndGlyphs">Attunned Magic Item</text>
<text x="880" y="789" class="p" textLength="130" lengthAdjust="spacingAndGlyphs">Attunned Magic Item</text>
<text x="880" y="824" class="p" textLength="130" lengthAdjust="spacingAndGlyphs">Attunned Magic Item</text>
</g>
<text x="963" y="849" font-size="10.500" class="b m" textLength="149" lengthAdjust="spacingAndGlyphs">MAGIC ITEM ATTUNEMENTS</text>

<!-- quivers -->
<use href="#cnt" x="1210" y="651"/><use href="#cnt" x="1210" y="770"/>
<use href="#qv" x="1098" y="627"/><use href="#qv" x="1098" y="746"/>
<text x="1240" y="682" font-size="26" class="m">0</text>
<text x="1229" y="702" font-size="16" class="b m">-</text><text x="1250" y="702" font-size="15" class="b m">+</text>
<text x="1239" y="802" font-size="26" class="m">0</text>
<text x="1228" y="821" font-size="16" class="b m">-</text><text x="1249" y="821" font-size="15" class="b m">+</text>

<!-- equipment -->
<path d="M31 664V847M292.500 664V847" stroke="#f7f3ef" stroke-width="3"/>
<path d="M27 660.500H35M27 850.500H35M289 660.500H297M289 850.500H297" stroke="#0a0a0a" stroke-width="4.500"/>
<rect x="34.500" y="655" width="255" height="200" fill="#f0e0d4" stroke="#0a0a0a" stroke-width="2.500"/>
<text x="40" y="669" font-size="8.500" class="b" textLength="32" lengthAdjust="spacingAndGlyphs">ARMOR</text>
<text x="39" y="684" font-size="8.500" class="b" textLength="43" lengthAdjust="spacingAndGlyphs">WEAPONS</text>
<g class="c"><circle cx="93" cy="666.500" r="5"/><circle cx="141" cy="666.500" r="5"/><circle cx="196" cy="666.500" r="5"/><circle cx="240" cy="666.500" r="5"/><circle cx="93" cy="682" r="5"/><circle cx="141" cy="682" r="5"/></g>
<g font-size="9">
<text x="101" y="669" style="fill:#333" textLength="23" lengthAdjust="spacingAndGlyphs">LIGHT</text><text x="150" y="669" style="fill:#333" textLength="36" lengthAdjust="spacingAndGlyphs">MEDIUM</text><text x="204" y="669" style="fill:#333" textLength="26" lengthAdjust="spacingAndGlyphs">HEAVY</text><text x="249" y="669" style="fill:#333" textLength="33" lengthAdjust="spacingAndGlyphs">SHIELDS</text>
<text x="101" y="684" style="fill:#333" textLength="29" lengthAdjust="spacingAndGlyphs">SIMPLE</text><text x="149" y="684" style="fill:#333" textLength="36" lengthAdjust="spacingAndGlyphs">MARTIAL</text>
</g>
<text x="40" y="699" font-size="10.500" class="p" textLength="144" lengthAdjust="spacingAndGlyphs">Specific Weapon Proficiencies</text>
<text x="39" y="733" font-size="8.500" class="b" textLength="27" lengthAdjust="spacingAndGlyphs">TOOLS</text>
<text x="40" y="744" font-size="10.500" class="p" textLength="85" lengthAdjust="spacingAndGlyphs">Tool Proficiencies</text>
<text x="39" y="792" font-size="8.500" class="b" textLength="51" lengthAdjust="spacingAndGlyphs">LANGUAGES</text>
<text x="38" y="802" font-size="10.500" class="p" textLength="90" lengthAdjust="spacingAndGlyphs">Languages Known</text>
<text x="158.500" y="848" font-size="11" class="b m" textLength="214" lengthAdjust="spacingAndGlyphs">EQUIPMENT TRAINING &amp; PROFICIENCIES</text>
</svg>
</body></html>
